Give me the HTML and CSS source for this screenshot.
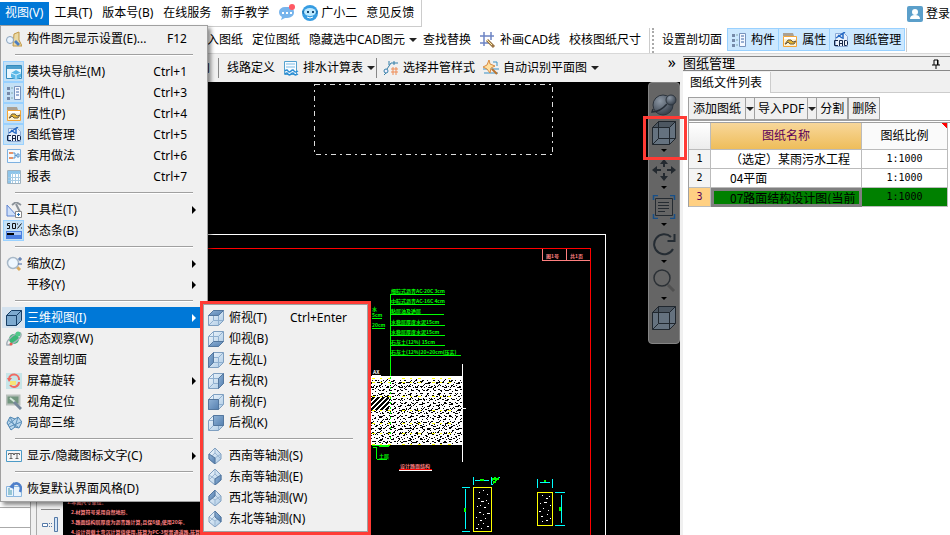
FILE: index.html
```html
<!DOCTYPE html>
<html lang="zh-CN">
<head>
<meta charset="utf-8">
<title>图纸管理</title>
<link rel="stylesheet" href="styles.css">
</head>
<body>
<svg class="defs" aria-hidden="true">
  <defs>
    <linearGradient id="glass" x1="0" y1="0" x2="1" y2="1"><stop offset="0" stop-color="#f4f9fd"/><stop offset="1" stop-color="#a9c8e4"/></linearGradient>
    <linearGradient id="deep" x1="0" y1="0" x2="1" y2="1"><stop offset="0" stop-color="#8fb2d6"/><stop offset="1" stop-color="#5580b0"/></linearGradient>
    <radialGradient id="ball" cx=".35" cy=".3" r=".7"><stop offset="0" stop-color="#8c97a4"/><stop offset="1" stop-color="#39424d"/></radialGradient>
    <symbol id="cube" viewBox="0 0 16 16"><path d="M.5 5.500l5-5h10v10l-5 5H.5z" fill="url(#glass)" stroke="#7f9fc0"/><path d="M.5 5.500h10v10M10.500 5.500l5-5M5.500.5v10h10M.5 15.500l5-5" fill="none" stroke="#8fafcf"/></symbol>
    <symbol id="iso" viewBox="0 0 16 16"><path d="M7 0l6 6v5l-6 5-6-5V6z" fill="url(#glass)" stroke="#7f9fc0"/><path d="M1 6l6 4 6-4M7 10v5M7 1v4l-6 6M7 5l6 6" fill="none" stroke="#9ab6d2"/></symbol>
    <symbol id="parts" viewBox="0 0 16 16"><path d="M1 2h3v3H1zM1 7h3v3H1zM1 12h3v3H1z" fill="#7689a8"/><path d="M5 3h2M5 8h2M5 13h2" stroke="#8aa"/><path d="M8.500 1.500h6v13h-6z" fill="#f5f9ff" stroke="#7893bd"/><path d="M10 4h3M10 7h3M10 10h3" stroke="#3e66a6"/></symbol>
    <symbol id="props" viewBox="0 0 16 16"><path d="M1 1h10l1 3H1z" fill="#aaa092"/><path d="M1.500 4.500h13v10h-13z" fill="#fff2cf" stroke="#f4a536"/><path d="M2 5h12v2H2z" fill="#fff"/><path d="M3 12l3-4h3l2 2 3-1-2 3H8l-2-2-2 2z" fill="#e6b52e" stroke="#695c48"/></symbol>
    <symbol id="cad" viewBox="0 0 16 16"><path d="M2.500 1.500h9l3 3v10h-12z" fill="#e9f1fb" stroke="#8ba9d5"/><path d="M3 6 12 0M5 3l4 3M10 2v5" stroke="#2368c4" stroke-width="1.500"/><path d="M5 8.500H1.500v5H5M6.500 14V8.500h3V14M6.500 11.500h3M11.500 8.500v5h2l1-1v-3l-1-1z" fill="none" stroke="#152647"/></symbol>
    <symbol id="viewcube" viewBox="0 0 24 24"><path d="M.5 6.500l6-6h17v17l-6 6H.5z" fill="#65727f" stroke="#20272e"/><path d="M.5 6.500l6-6h17l-6 6z" fill="#4d5761" stroke="#20272e"/><path d="M17.500 6.500v17M6.500.5v17h17M.5 23.500l6-6" fill="none" stroke="#20272e"/></symbol>
  </defs>
</svg>

<div class="app">
  <header class="menubar">
    <nav class="menus">
      <button class="menu-title open">视图(V)</button>
      <button class="menu-title">工具(T)</button>
      <button class="menu-title">版本号(B)</button>
      <button class="menu-title">在线服务</button>
      <button class="menu-title">新手教学</button>
      <button class="menu-title icon-only" aria-label="消息"><svg class="i18" viewBox="0 0 18 18"><path d="M1 8a6 5 0 0 1 6-5h4a5 5 0 0 1 5 5c0 4-3 6-9 6l-4 2 1-3C2 12 1 10 1 8z" fill="#77b4ec"/><path d="M4 8h2v2H4zM8 8h2v2H8zM12 8h2v2h-2z" fill="#fff"/><circle cx="14" cy="3" r="3" fill="#ff5964"/></svg></button>
      <button class="menu-title helper"><svg class="i18" viewBox="0 0 18 18"><circle cx="9" cy="9" r="8" fill="#369ce2"/><path d="M1 7 4 6v4H2zM17 7l-3-1v4h2z" fill="#1e7bbd"/><ellipse cx="9" cy="8" rx="6" ry="4" fill="#bce9ff"/><path d="M6 7h2v2H6zM11 7h2v2h-2z" fill="#174a76"/><path d="M6 13q3 2 6 0" stroke="#fff" fill="none"/></svg>广小二</button>
      <button class="menu-title">意见反馈</button>
    </nav>
    <button class="login"><svg class="i16" viewBox="0 0 16 16"><rect width="16" height="16" rx="2" fill="#5b9fca"/><circle cx="8" cy="6" r="3" fill="#fff"/><path d="M3 13q0-4 5-4t5 4z" fill="#fff"/></svg>登录</button>
  </header>

  <div class="toolbar tools-top">
    <button>导入图纸</button>
    <button>定位图纸</button>
    <button class="drop">隐藏选中CAD图元</button>
    <button>查找替换</button>
    <button><svg class="i16" viewBox="0 0 16 16"><path d="M0 4h14M0 11h10M4 0v14M11 0v8" stroke="#6d84c4" stroke-width="1.500"/><path d="M7 8l7 7" stroke="#9a7547" stroke-width="3"/><path d="M7 8l5 5" stroke="#fff0ad"/></svg>补画CAD线</button>
    <button>校核图纸尺寸</button>
    <span class="grip"></span>
    <button>设置剖切面</button>
    <div class="toggles">
      <button class="toggle" aria-pressed="true"><svg class="i16"><use href="#parts"/></svg>构件</button>
      <button class="toggle" aria-pressed="true"><svg class="i16"><use href="#props"/></svg>属性</button>
      <button class="toggle" aria-pressed="true"><svg class="i16"><use href="#cad"/></svg>图纸管理</button>
    </div>
  </div>

  <div class="workspace">
    <main class="editor">
      <div class="toolbar tools-second">
        <button>单向</button>
        <span class="rule"></span>
        <button>线路定义</button>
        <button class="drop"><svg class="i16" viewBox="0 0 16 16"><path d="M1.500 1.500h12v13h-12z" fill="#f8fcff" stroke="#55a2cf"/><path d="M3 4h9M3 7h9" stroke="#7cbbe4"/><path d="M2 11q2-2 3 0t3 0 3 0 4 0M2 14q2-2 3 0t3 0 3 0 4 0" fill="none" stroke="#268bd4" stroke-width="1.500"/></svg>排水计算表</button>
        <span class="rule tight"></span>
        <button><svg class="i16" viewBox="0 0 16 16"><circle cx="3" cy="11" r="2" fill="#eef" stroke="#357fa8"/><path d="M4 9 8 3h7M6 1v4M11 1v4M3 13l-2 2" fill="none" stroke="#357fa8"/><path d="M8 9h7M8 12h7M10 7v8M13 7v8" stroke="#ee8b54"/></svg>选择井管样式</button>
        <button class="drop"><svg class="i16" viewBox="0 0 16 16"><path d="M0 9h16M1 13h14M10 2h4v4" fill="none" stroke="#3a91c5"/><path d="M6 0l1 4 5 2-4 2-1 5-3-4-4-2 4-2z" fill="#ffe0a0" stroke="#d98b42"/><path d="M9 9l5 5" stroke="#bc7430" stroke-width="2"/></svg>自动识别平面图</button>
        <button class="more" aria-label="更多">»</button>
      </div>

      <div class="stage">
        <div class="side-list"><span></span><span></span></div>
        <div class="side-tools"><span class="side-rule"></span><svg class="i16" viewBox="0 0 16 16"><path d="M.5 6.500h5v3h-5z" fill="#fff" stroke="#5579a7"/><path d="M7 6.500h1M7 9.500h1M9 6.500h1M9 9.500h1" stroke="#5579a7"/><path d="M12.500.5h3v14h-3z" fill="#d3e5f7" stroke="#5579a7"/></svg></div>
        <div class="canvas">
          <svg class="drawing" viewBox="62 82 618 453" preserveAspectRatio="xMinYMin slice" shape-rendering="crispEdges" fill="none">
            <defs>
              <pattern id="grain" width="29" height="23" patternUnits="userSpaceOnUse"><path d="M1 3h2v-1h2M7 5h2v-1h1M13 2h2v1M19 5l3-3M25 4h2M2 9l3-3M9 9h2v-1h2M16 8h2M22 10l3-3M0 14h3v-1M6 15l4-4M13 13h2v-1h2M20 15h2v-1h2M26 12h2M1 19l3-3M8 19h2v-1M14 20l4-4M21 19h3v-1M26 21l3-3M4 22h2M11 22h2M19 22h2" stroke="#000"/></pattern>
              <pattern id="speck" width="11" height="13" patternUnits="userSpaceOnUse"><path d="M0 1h1v1H0zM4 0h2v1H4zM8 3h1v1H8zM2 5h1v1H2zM6 6h2v1H6zM10 8h1v1h-1zM1 9h2v1H1zM5 10h1v1H5zM8 12h2v1H8zM3 3h1v1H3zM9 5h1v1H9zM4 8h1v1H4zM7 9h1v1H7zM3 12h1v1H3z" fill="#000"/></pattern>
              <pattern id="bars" width="5" height="5" patternUnits="userSpaceOnUse"><path d="M-1 6 6-1M-1 1 1-1M4 6l2-2" stroke="#000" stroke-width="2"/></pattern>
            </defs>
            <path d="M313.500 84.500h238v70h-238z" stroke="#ddd" stroke-dasharray="5 4 2 4"/>
            <path d="M62 234.500h542.500v301" stroke="#fff"/>
            <path d="M62 248.500h527.500v287" stroke="#f00"/>
            <path d="M541.500 249v11.500h47.500M565.500 249v11" stroke="#ff8080"/>
            <g class="cad-text pink"><text x="545" y="258">图1号</text><text x="569" y="258">共1页</text></g>
            <path d="M389.500 295v81M389 294.500h55M389 304.500h55M389 314.500h54M389 325.500h55M389 335.500h55M389 345.500h55M389 355.500h71M371 318.500h10M371 328.500h13" stroke="#0f0"/>
            <g class="cad-text green">
              <text x="390" y="293">细粒式沥青AC-20C 3cm</text>
              <text x="390" y="303">中粒式沥青AC-16C 4cm</text>
              <text x="390" y="313">粘层油及透层</text>
              <text x="390" y="324">水稳层厚度水泥15cm</text>
              <text x="390" y="334">水稳层厚度水泥15cm</text>
              <text x="390" y="344">石灰土(12%) 15cm</text>
              <text x="390" y="354">石灰土(12%)20+20cm(压实)</text>
              <text x="371" y="311">水</text><text x="371" y="317">5cm</text><text x="371" y="327">20cm</text>
            </g>
            <text class="cad-text white" x="372" y="374">AX</text>
            <path d="M366 376h96v69h-96z" fill="#fff"/>
            <path d="M366 379h95v65h-95z" fill="url(#grain)"/><path d="M366 379h95v65h-95z" fill="url(#speck)"/>
            <path d="M366 397h22v13h-22z" fill="#fff"/><path d="M366 397h22v13h-22z" fill="url(#bars)"/>
            <path d="M371 378.500h90M371 382.500h90M371 396.500h90M371 410.500h90M371 423.500h90M371 433.500h90M371 444.500h90" stroke="#ff0" stroke-dasharray="3 5 2 6 3 11"/>
            <path d="M461.500 364v98M461 408.500h4M371 375.500h9" stroke="#fff"/>
            <path d="M389.500 377v62" stroke="#0f0" stroke-dasharray="2 3"/>
            <path d="M371 445.500h18M372 447.500h4M378 446.500h10M375.500 447v12M376 459.500h10" stroke="#0f0"/>
            <text class="cad-text green" x="378" y="458">土层</text>
            <text class="cad-text pink" x="399" y="468">设计路面结构</text>
            <path d="M398 469.500h33" stroke="#f00"/><path d="M398 470.500h33" stroke="#fff"/>
            <path d="M472.500 487.500h18v44h-18zM536.500 492.500h15v33h-15z" stroke="#ff0"/>
            <path d="M464.500 489v40M461 487.500h8M461 531.500h8M472.500 477v8M490.500 477v8M474 480.500h14M536.500 479v9M551.500 479v9M539 482.500h10M560.500 495v28M554 492.500h10M554 525.500h10M491 485l8-8" stroke="#0ff"/>
            <path d="M479 479.500h4M543 480.500h2M463.500 508v4M558.500 507v4M491 480l3-2 1 2 3-2M492 483l3-2" stroke="#0f0" stroke-width="2"/>
            <path d="M478 492h1M482 490h1M486 494h1M477 498h2M480 501h3M485 500h1M476 506h1M479 505h1M483 507h2M487 503h1M478 512h2M482 514h1M486 513h3M475 517h1M479 520h2M484 518h1M477 524h1M482 523h1M486 526h2M475 528h2M480 528h1M541 495h1M545 498h2M548 496h1M539 503h1M543 502h3M549 505h1M538 511h2M542 508h1M547 510h1M540 516h2M546 514h1M549 518h1M541 521h1M545 520h2" stroke="#fff"/>
            <g class="cad-text pink">
              <text x="66" y="504">1.本图尺寸单位。</text>
              <text x="70" y="514">2.材算符号采用自然地形。</text>
              <text x="70" y="524">3.路面结构层厚度为沥青路计算,且保6级,使用20年。</text>
              <text x="70" y="534">4.设计荷载土弯沉计算值使用,按算为PC-3型普通道路,按算为0.3。</text>
            </g>
          </svg>

          <div class="view-tools">
            <button class="orbit" aria-label="动态观察"><svg viewBox="0 0 26 25"><circle cx="12" cy="13" r="10" fill="url(#ball)" stroke="#2c343d"/><circle cx="20" cy="8" r="5" fill="url(#ball)" stroke="#2c343d"/><path d="M2 17l-1 3q8 0 15-8" fill="none" stroke="#252d36" stroke-width="1.500"/></svg></button>
            <button class="view framed" aria-label="三维视图"><svg class="i24"><use href="#viewcube"/></svg></button>
            <button class="view" aria-label="平移"><svg class="i24" viewBox="0 0 24 24" fill="#23292f"><path d="M12 1l4 5h-3v3h-2V6H8zM12 23l4-5h-3v-3h-2v3H8zM0 12l5-4v3h4v2H5v3zM24 12l-5-4v3h-4v2h4v3z"/></svg></button>
            <button class="view" aria-label="图层"><svg class="i24" viewBox="0 0 24 24" fill="none"><path d="M1.500 5V.5H6M18 .5h4.500V5M1.500 19v4.500H6M18 23.500h4.500V19" stroke="#174f88" stroke-width="1.500"/><path d="M3.500 3.500h17v17h-17zM6 7.500h11M6 10.500h11M6 13.500h11M6 16.500h7" stroke="#252b31"/></svg></button>
            <button class="view" aria-label="旋转"><svg class="i24" viewBox="0 0 24 24"><path d="M19 5a10 10 0 1 0 2 12" fill="none" stroke="#252c33" stroke-width="2"/><path d="M22.500 2v7h-7" fill="none" stroke="#252c33" stroke-width="2"/></svg></button>
            <button class="view" aria-label="缩放"><svg class="i24" viewBox="0 0 24 24" fill="none"><path d="M16 16l6 6" stroke="#505050" stroke-width="3"/><circle cx="10" cy="9" r="8" stroke="#2b3035" stroke-width="1.500"/></svg></button>
            <button class="view last" aria-label="线框"><svg class="i24"><use href="#viewcube"/></svg></button>
          </div>
        </div>
      </div>
    </main>

    <aside class="panel">
      <div class="panel-title"><h2>图纸管理</h2><button class="pin" aria-label="固定"><svg viewBox="0 0 8 10"><path d="M2 6V1h4v5M0 6h8M4 6v4" fill="none" stroke="#000"/><path d="M5 1h1v5H5z"/></svg></button></div>
      <div class="tabs"><button class="tab">图纸文件列表</button><span></span></div>
      <div class="panel-body">
        <div class="actions">
          <button>添加图纸</button><button class="arrow" aria-label="添加选项"></button>
          <button>导入PDF</button><button class="arrow" aria-label="导入选项"></button>
          <button>分割</button><button>删除</button>
        </div>
        <table class="sheets">
          <colgroup><col class="c-num"><col class="c-name"><col class="c-scale"></colgroup>
          <thead><tr><th></th><th class="sorted">图纸名称</th><th class="flag">图纸比例</th></tr></thead>
          <tbody>
            <tr><th>1</th><td>（选定）某雨污水工程</td><td>1:1000</td></tr>
            <tr><th>2</th><td>04平面</td><td>1:1000</td></tr>
            <tr class="current"><th>3</th><td>07路面结构设计图(当前</td><td>1:1000</td></tr>
          </tbody>
        </table>
      </div>
    </aside>
  </div>
</div>

<div class="menu view-menu">
  <button class="item"><span class="ico"><svg class="i16" viewBox="0 0 16 16"><path d="M8 3l5-2v8l3 6H7z" fill="#ead9a4" stroke="#c29846"/><circle cx="4" cy="9" r="3.500" fill="#e9f4ff" stroke="#8ba3bd"/><path d="M8 11l2-2 4 4-2 2z" fill="#4c7ec1"/></svg></span>构件图元显示设置(E)...<kbd>F12</kbd></button>
  <hr>
  <button class="item"><span class="ico on"><svg class="i16" viewBox="0 0 16 16"><path d="M.5 1.500h15v13H.5z" fill="#eaf6fd" stroke="#348bbd"/><path d="M1 2h14v3H1z" fill="#4d9fcd"/><path d="M5 9l5-3 5 3v4l-5 3-5-3z" fill="#5ab7e6"/><path d="M5 9l5 2 5-2M10 11v5" stroke="#d3f0ff" fill="none"/></svg></span>模块导航栏(M)<kbd>Ctrl+1</kbd></button>
  <button class="item"><span class="ico on"><svg class="i16"><use href="#parts"/></svg></span>构件(L)<kbd>Ctrl+3</kbd></button>
  <button class="item"><span class="ico on"><svg class="i16"><use href="#props"/></svg></span>属性(P)<kbd>Ctrl+4</kbd></button>
  <button class="item"><span class="ico on"><svg class="i16"><use href="#cad"/></svg></span>图纸管理<kbd>Ctrl+5</kbd></button>
  <button class="item"><span class="ico"><svg class="i16" viewBox="0 0 16 16"><path d="M1.500 1.500h13v13h-13z" fill="#f4faff" stroke="#7db1e1"/><path d="M3 4h4v2H3zM3 9h4v2H3z" fill="#e5936b"/><path d="M7 5h2v5H7M9 7.500h2M11 6h2v3h-2z" stroke="#5792ca" fill="none"/></svg></span>套用做法<kbd>Ctrl+6</kbd></button>
  <button class="item"><span class="ico"><svg class="i16" viewBox="0 0 16 16"><path d="M1.500 1.500h13v13h-13z" fill="#fff" stroke="#9fb2c0"/><path d="M2 2h12v3H2zM2 5h3v9H2z" fill="#8ec5ea"/><path d="M6.500 4v10M9.500 4v10M12.500 4v10M2 8.500h12M2 11.500h12" stroke="#a8cce5"/></svg></span>报表<kbd>Ctrl+7</kbd></button>
  <hr>
  <button class="item more-items"><span class="ico"><svg class="i16" viewBox="0 0 16 16"><path d="M1 3l10 11H1z" fill="#cee0fa" stroke="#5e83d0"/><path d="M6 3l4-3 5 3M10 2l4 8" stroke="#8b9299" stroke-width="2" fill="none"/><path d="M9.500 9.500h6v6h-6z" fill="#fff" stroke="#888"/><path d="M11 12.500h3M12.500 11v3" stroke="#236fb4"/></svg></span>工具栏(T)</button>
  <button class="item"><span class="ico on"><svg class="i16" viewBox="0 0 16 16"><path d="M4 .5H1.500v2h2v3H1M6.500.5h3v5h-3zM11.500 5.500l4-5M11.500.5v1M15.500 4.500v1" fill="none" stroke="#111"/><path d="M0 8h16v8H0z" fill="#4b7ee0"/><path d="M1 9h14v3H1z" fill="#a8c5f5"/><path d="M1 10h7v2H1z" fill="#000"/></svg></span>状态条(B)</button>
  <hr>
  <button class="item more-items"><span class="ico"><svg class="i16" viewBox="0 0 16 16"><path d="M10 10l4 4" stroke="#d9aa5f" stroke-width="3"/><circle cx="7" cy="7" r="5.500" fill="#eef7ff" stroke="#a8b8c7" stroke-width="1.500"/><path d="M12 3h4M14 1v4M12 8h4" stroke="#4166a4"/></svg></span>缩放(Z)</button>
  <button class="item more-items"><span class="ico"></span>平移(Y)</button>
  <hr>
  <button class="item more-items active"><span class="ico"><svg class="i16" viewBox="0 0 16 16"><path d="M.5 5.500l5-5h10v10l-5 5H.5z" fill="#7daacf" stroke="#173f66"/><path d="M.5 5.500h10v10M10.500 5.500l5-5" fill="none" stroke="#173f66"/></svg></span>三维视图(I)</button>
  <button class="item"><span class="ico"><svg class="i16" viewBox="0 0 16 16"><circle cx="8" cy="8" r="5" fill="#3cb878"/><path d="M1 14C-1 9 14-2 15 3c1 4-10 12-14 11z" fill="none" stroke="#a4b0b8" stroke-width="1.500"/><circle cx="12" cy="3" r="2.500" fill="#52c98a"/><circle cx="5" cy="13" r="1.500" fill="#e65c53"/></svg></span>动态观察(W)</button>
  <button class="item"><span class="ico"></span>设置剖切面</button>
  <button class="item more-items"><span class="ico"><svg class="i16" viewBox="0 0 16 16"><path d="M0 0h16v16H0z" fill="#c7e5e8"/><path d="M3 6a5 5 0 0 1 10 1M13 9a5 5 0 0 1-9 3" fill="none" stroke="#f06b63" stroke-width="2"/><path d="M4 8h6v4H4z" fill="#f6e477"/><path d="M1 5h5l-3 4z" fill="#ef675f"/></svg></span>屏幕旋转</button>
  <button class="item"><span class="ico"><svg class="i16" viewBox="0 0 16 16"><path d="M.5 1.500h13v9H.5z" fill="#73967f" stroke="#b8c0bb" stroke-width="2"/><path d="M4 4l5 4" stroke="#d5e8db" stroke-width="2"/><path d="M8 8l7 7" stroke="#76879a" stroke-width="3"/></svg></span>视角定位</button>
  <button class="item"><span class="ico"><svg class="i16" viewBox="0 0 16 16"><path d="M1 8l3-6 5 2 3-2 4 5-3 6-4-1-4 3z" fill="#b9d7ee" stroke="#4c83b0"/><path d="M4 2l5 10M9 4l-7 6M12 2l-3 10M3 12l12-5M2 5l10 7" fill="none" stroke="#5d91ba"/></svg></span>局部三维</button>
  <hr>
  <button class="item more-items"><span class="ico"><svg class="i16" viewBox="0 0 16 16"><path d="M.5 2.500h15v11H.5z" fill="#f6f6f6" stroke="#4d9bc7"/><path d="M2.500 7V5.500h5V7M5 5v6M3.500 10.500h3M8.500 7V5.500h5V7M11 5v6M9.500 10.500h3" stroke="#666" fill="none"/></svg></span>显示/隐藏图标文字(C)</button>
  <hr>
  <button class="item"><span class="ico"><svg class="i16" viewBox="0 0 16 16"><path d="M.5 5.500h7v10h-7zM7.500 5.500h8v10h-8z" fill="#e9f3fc" stroke="#8bb6de"/><path d="M3 7v7M5 9v5" stroke="#49a"/><path d="M6 5c4-5 11-2 8 6" stroke="#4e7fca" stroke-width="2.500" fill="none"/><path d="M3 6l5 2V1z" fill="#4e7fca"/></svg></span>恢复默认界面风格(D)</button>
</div>

<div class="callout">
  <div class="menu sub-menu">
    <button class="item"><span class="ico"><svg class="i16" viewBox="0 0 16 16"><use href="#cube"/><path d="M.5 5.500l5-5h10l-5 5z" fill="url(#deep)" stroke="#54779e"/></svg></span>俯视(T)<kbd>Ctrl+Enter</kbd></button>
    <button class="item"><span class="ico"><svg class="i16" viewBox="0 0 16 16"><use href="#cube"/><path d="M.5 15.500l5-5h10l-5 5z" fill="url(#deep)" stroke="#54779e"/></svg></span>仰视(B)</button>
    <button class="item"><span class="ico"><svg class="i16" viewBox="0 0 16 16"><use href="#cube"/><path d="M.5 5.500l5-5v10l-5 5z" fill="url(#deep)" stroke="#54779e"/></svg></span>左视(L)</button>
    <button class="item"><span class="ico"><svg class="i16" viewBox="0 0 16 16"><use href="#cube"/><path d="M10.500 5.500l5-5v10l-5 5z" fill="url(#deep)" stroke="#54779e"/></svg></span>右视(R)</button>
    <button class="item"><span class="ico"><svg class="i16" viewBox="0 0 16 16"><use href="#cube"/><path d="M.5 5.500h10v10H.5z" fill="url(#deep)" stroke="#54779e"/></svg></span>前视(F)</button>
    <button class="item"><span class="ico"><svg class="i16" viewBox="0 0 16 16"><use href="#cube"/><path d="M5.500.5h10v10h-10z" fill="url(#deep)" stroke="#54779e"/></svg></span>后视(K)</button>
    <hr>
    <button class="item"><span class="ico"><svg class="i16" viewBox="0 0 16 16"><use href="#iso"/><path d="M1 6l6 4v6l-6-5z" fill="url(#deep)" stroke="#54779e"/></svg></span>西南等轴测(S)</button>
    <button class="item"><span class="ico"><svg class="i16" viewBox="0 0 16 16"><use href="#iso"/><path d="M13 6l-6 4v6l6-5z" fill="url(#deep)" stroke="#54779e"/></svg></span>东南等轴测(E)</button>
    <button class="item"><span class="ico"><svg class="i16" viewBox="0 0 16 16"><use href="#iso"/><path d="M7 0v6l-6 5V6z" fill="url(#deep)" stroke="#54779e"/></svg></span>西北等轴测(W)</button>
    <button class="item"><span class="ico"><svg class="i16" viewBox="0 0 16 16"><use href="#iso"/><path d="M7 0v6l6 5V6z" fill="url(#deep)" stroke="#54779e"/></svg></span>东北等轴测(N)</button>
  </div>
</div>
</body>
</html>
```
FILE: styles.css
```css
* { box-sizing: border-box; }

body {
  margin: 0;
  overflow: hidden;
  background: #fff;
  color: #000;
  font: 12px/16px "Noto Sans", "Noto Sans CJK SC", sans-serif;
}

button {
  margin: 0;
  padding: 0;
  border: 0;
  background: none;
  color: inherit;
  font: inherit;
  white-space: nowrap;
}

svg { display: block; flex: none; }
.defs { position: absolute; width: 0; height: 0; }
.i16 { width: 16px; height: 16px; }
.i18 { width: 18px; height: 18px; }
.i24 { width: 24px; height: 24px; }

.app { display: flex; flex-direction: column; height: 100vh; }

/* Menu bar */
.menubar { display: flex; justify-content: space-between; height: 27px; }
.menus {
  display: flex;
  align-items: center;
  padding-right: 2px;
  border-right: 1px solid #ccc;
  border-bottom: 1px solid #ccc;
}
.menu-title { height: 23px; padding: 0 5px; }
.menu-title.open { padding-right: 6px; background: #0078d7; color: #fff; }
.menu-title.icon-only { padding: 0 2px 0 4px; }
.menu-title.helper { padding: 0 4px 0 3px; }
.helper, .login { display: flex; align-items: center; gap: 2px; }
.login { gap: 3px; }

/* Toolbars */
.toolbar { display: flex; align-items: center; }
.toolbar button { display: flex; align-items: center; gap: 4px; }
.drop::after, .actions .arrow::after {
  content: "";
  border: 4px solid transparent;
  border-top-color: #222;
  border-bottom: 0;
}
.tools-top {
  gap: 9px;
  height: 27px;
  padding-left: 195px;
  border-bottom: 1px solid #d8d8d8;
}
.tools-top .drop { margin-right: -3px; }
.grip {
  width: 5px;
  height: 25px;
  border-left: 1px solid #ccc;
  border-right: 2px dotted #aaa;
}
.toggles { display: flex; height: 24px; padding-right: 1px; margin-left: -4px; border-right: 1px solid #ccc; }
.toolbar .toggle {
  height: 23px;
  padding: 0 3px;
  border: 1px solid #99d1ff;
  background: #cce8ff;
}
.toggle + .toggle { border-left: 0; }
.tools-top .grip { margin-left: -1px; margin-right: -1px; }

.tools-second {
  gap: 8px;
  height: 28px;
  padding: 0 4px 0 186px;
  background: #f0f0f0;
}
.tools-second .drop { margin-right: -4px; }
.rule { width: 1px; height: 20px; background: #888; }
.rule.tight { margin: 0 -2px 0 -3px; }
.tools-second .more { margin-left: auto; align-self: flex-start; font-size: 16px; }

/* Work area */
.workspace { flex: 1; min-height: 0; display: grid; grid-template-columns: minmax(0, 1fr) 268px; }
.editor {
  display: flex;
  flex-direction: column;
  min-width: 0;
  min-height: 0;
  padding-right: 2px;
  background: #f0f0f0;
}
.stage { flex: 1; display: flex; min-height: 0; }
.side-list {
  width: 31px;
  display: flex;
  flex-direction: column;
  justify-content: flex-end;
  border-right: 1px solid #aaa;
  background: #fff;
}
.side-list span { height: 20px; border-top: 1px solid #aaa; }
.side-list span:last-child { height: 8px; }
.side-tools {
  width: 27px;
  margin-left: 5px;
  padding-bottom: 2px;
  display: flex;
  flex-direction: column;
  justify-content: flex-end;
  align-items: center;
  gap: 7px;
  border-left: 1px solid #aaa;
}
.side-rule { width: 19px; height: 1px; background: #888; }
.canvas { position: relative; flex: 1; min-width: 0; background: #000; }
.drawing { width: 100%; height: 100%; }

.cad-text { font: 700 5px/6px "Noto Sans CJK SC", sans-serif; }
.green { fill: #0f0; }
.pink { fill: #ff8080; }
.white { fill: #fff; }

.view-tools {
  position: absolute;
  top: 0;
  right: 0;
  width: 32px;
  padding: 9px 0 13px;
  display: flex;
  flex-direction: column;
  border: 1px solid #858585;
  border-radius: 4px;
  background: #656565;
}
.view-tools button { display: flex; flex-direction: column; align-items: center; }
.orbit { height: 24px; }
.orbit svg { width: 26px; height: 25px; }
.view { position: relative; height: 37px; padding-top: 5px; gap: 4px; }
.view::after {
  content: "";
  border: 3px solid transparent;
  border-top-color: #000;
  border-bottom: 0;
}
.view.last { height: 29px; }
.view.last::after { display: none; }
.framed::before {
  content: "";
  position: absolute;
  inset: 0 -8px -7px -6px;
  z-index: 2;
  border: 3px solid #ff3b35;
}

/* Sheet panel */
.panel { display: flex; flex-direction: column; min-width: 0; padding: 2px 0 0 1px; background: #f0f0f0; }
.panel-title {
  display: flex;
  justify-content: space-between;
  align-items: center;
  height: 15px;
  padding-right: 10px;
  border-top: 1px solid #888;
  border-bottom: 1px solid #888;
}
.panel-title h2 { margin: 0; font-size: 13px; font-weight: 400; line-height: 13px; }
.pin svg { width: 8px; height: 10px; }
.tabs { display: flex; height: 22px; padding-top: 1px; }
.tab { padding: 0 8px 0 7px; border-right: 1px solid #ccc; background: #fff; }
.tabs span { flex: 1; border-bottom: 1px solid #ccc; }
.panel-body { flex: 1; padding: 4px 0 0 5px; background: #fff; }
.actions { display: flex; height: 23px; }
.actions button { padding: 0 4px; border: 1px solid #a0a0a0; background: #f0f0f0; }
.actions .arrow { display: flex; align-items: center; width: 8px; padding: 0; border-width: 1px 0; }
.actions button:nth-child(n+3) { padding: 0 3px; }
.actions .arrow:nth-child(n) { padding: 0; }

.sheets {
  width: 100%;
  table-layout: fixed;
  border-collapse: separate;
  border-spacing: 0;
  border-top: 3px double #a0a0a0;
  border-left: 1px solid #a0a0a0;
  padding-right: 2px;
}
.c-num { width: 22px; }
.c-scale { width: 86px; }
.sheets th, .sheets td {
  height: 19px;
  padding: 0;
  border-right: 1px solid #bbb;
  border-bottom: 1px solid #bbb;
  font-weight: 400;
  line-height: 16px;
  text-align: center;
  white-space: nowrap;
}
.sheets thead th { height: 27px; background: linear-gradient(#fff, #ececec); }
.sheets thead .sorted { background: linear-gradient(#f8d79a, #eebd5a); color: #5c0058; }
.sheets thead .flag { background: linear-gradient(225deg, #f00 4px, transparent 4px), #fafafa; }
.sheets tbody th { background: #f4f4f4; font-family: "DejaVu Sans Mono", monospace; font-size: 10px; }
.sheets td:nth-child(2) { padding-left: 19px; text-align: left; font-family: "Noto Sans CJK SC", sans-serif; }
.sheets td:nth-child(3) { font-family: "DejaVu Sans Mono", monospace; font-size: 10px; }
.sheets .current th { background: #ffd083; color: #5c0058; }
.sheets .current td { background: #008000; }
.sheets .current td:nth-child(2) { padding-left: 16px; border: 3px solid #808080; line-height: 13px; overflow: hidden; }

/* Drop-down menus */
.menu { border: 1px solid #a0a0a0; padding: 2px 1px; background: #f0f0f0; }
.view-menu {
  position: absolute;
  z-index: 5;
  top: 25px;
  left: 0;
  width: 208px;
  box-shadow: 3px 3px 4px rgba(0, 0, 0, .45);
}
.item {
  position: relative;
  display: flex;
  align-items: center;
  width: 100%;
  height: 21px;
  padding-right: 18px;
}
.item kbd { margin-left: auto; padding-right: 1px; font: inherit; }
.ico {
  display: flex;
  align-items: center;
  justify-content: center;
  width: 21px;
  height: 21px;
  margin: 0 3px 0 1px;
}
.ico.on { border: 1px solid #99d1ff; background: #c4e0f5; }
.menu hr {
  height: 2px;
  margin: 5px 13px;
  border: 0;
  border-top: 1px solid #a0a0a0;
  background: #fff;
}
.more-items::after {
  content: "";
  margin-left: auto;
  margin-right: -8px;
  border: 4px solid transparent;
  border-left-color: #000;
  border-right: 0;
}
.active { background: linear-gradient(90deg, #d5e3ef 23px, #0078d7 23px); color: #fff; }
.active::after { border-left-color: #fff; }
.callout {
  position: absolute;
  z-index: 6;
  top: 301px;
  left: 200px;
  width: 171px;
  border: 3px solid #ff3b35;
}
.sub-menu .ico { margin: 0 3px 0 0; }
```
